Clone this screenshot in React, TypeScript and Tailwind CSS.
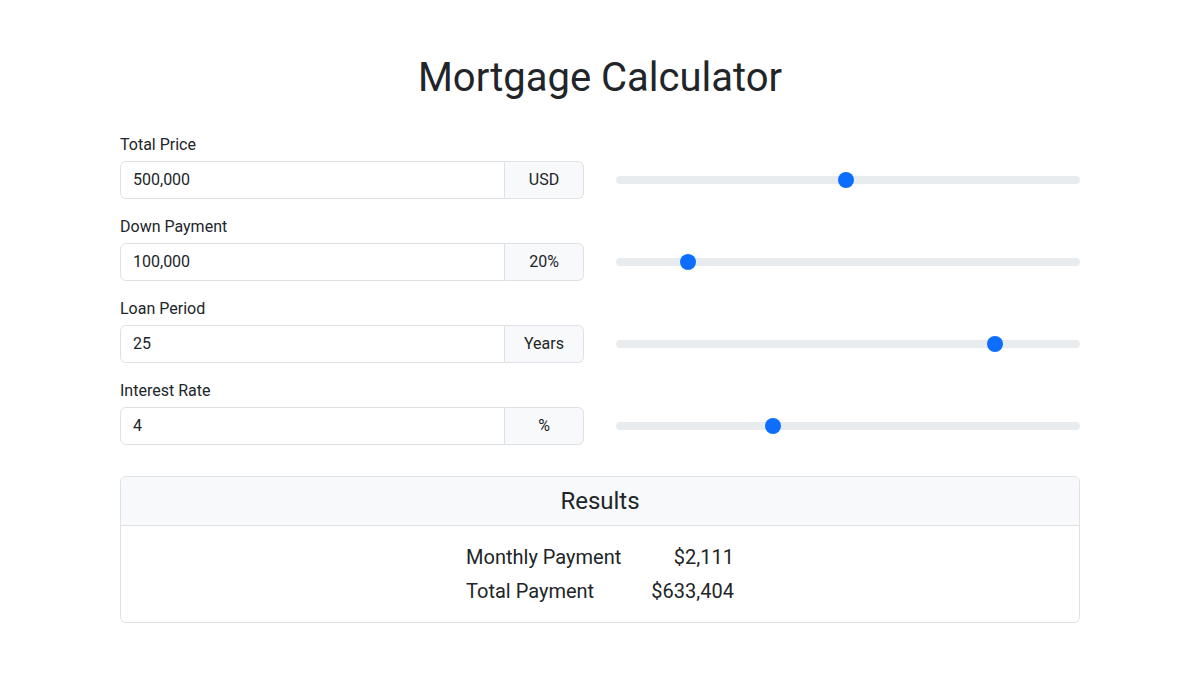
const fields = [
  { label: "Total Price", value: "500,000", unit: "USD", pct: 0.495 },
  { label: "Down Payment", value: "100,000", unit: "20%", pct: 0.143 },
  { label: "Loan Period", value: "25", unit: "Years", pct: 0.828 },
  { label: "Interest Rate", value: "4", unit: "%", pct: 0.333 },
]

const Slider = ({ pct }: { pct: number }) => {
  return (
    <div className="relative w-full h-2 rounded-full bg-[#e9ecef]">
      <div
        className="absolute top-1/2 -translate-y-1/2 w-4 h-4 rounded-full bg-[#0d6efd]"
        style={{ left: `calc(${pct} * (100% - 16px))` }}
      />
    </div>
  )
}

const App = () => {
  return (
    <div className="w-full min-h-[675px] bg-white text-[#212529] font-['Roboto',sans-serif]">
      <div className="w-[960px] mx-auto pt-[54px]">
        <h1 className="text-[40px] leading-[48px] text-center font-normal mb-[31px]">Mortgage Calculator</h1>
        <div className="flex flex-col">
          {fields.map((f) => (
            <div key={f.label} className="flex gap-8 mb-4">
              <div className="w-[464px] flex flex-col">
                <label className="text-base leading-6 mb-1">{f.label}</label>
                <div className="flex h-[38px]">
                  <div className="flex-1 flex items-center px-3 border border-[#dee2e6] rounded-l-md text-base">{f.value}</div>
                  <div className="w-[79px] flex items-center justify-center border border-l-0 border-[#dee2e6] rounded-r-md bg-[#f8f9fa] text-base">{f.unit}</div>
                </div>
              </div>
              <div className="flex-1 flex flex-col justify-end">
                <div className="h-[38px] flex items-center">
                  <Slider pct={f.pct} />
                </div>
              </div>
            </div>
          ))}
        </div>
        <div className="mt-[15px] border border-[#dee2e6] rounded-md overflow-hidden">
          <div className="h-[49px] flex items-center justify-center bg-[#f8f9fa] border-b border-[#dee2e6] text-2xl">Results</div>
          <div className="py-[14px] flex justify-center">
            <div className="grid grid-cols-[auto_auto] gap-x-[30px] text-xl leading-[34px]">
              <div>Monthly Payment</div>
              <div className="text-right">$2,111</div>
              <div>Total Payment</div>
              <div className="text-right">$633,404</div>
            </div>
          </div>
        </div>
      </div>
    </div>
  )
}
export default App
